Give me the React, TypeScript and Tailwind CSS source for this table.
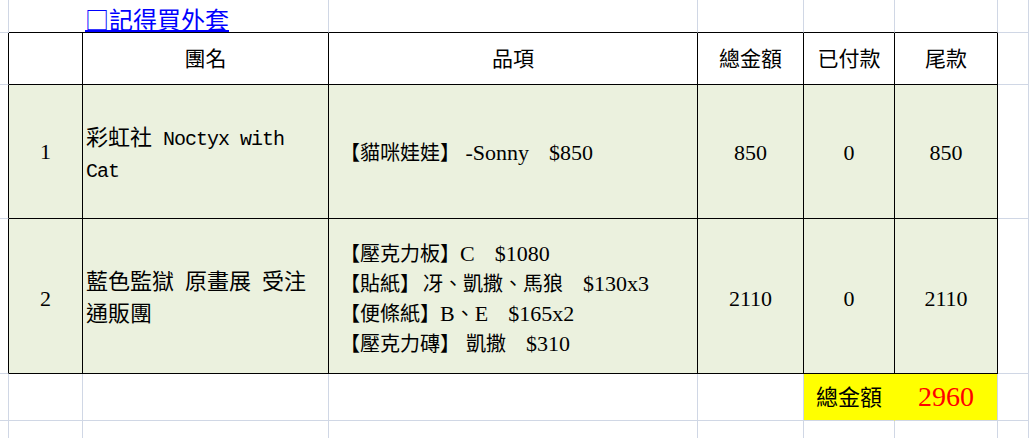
import React from "react";

const serif = "font-['Liberation_Serif','Noto_Sans_CJK_TC',serif]";

// latin part of an item line, a bit larger than the CJK text like in the sheet
function L({ children }: { children: React.ReactNode }) {
  return <span className="text-[22px]">{children}</span>;
}

// half-width monospaced latin used in the 團名 column
function M({ children }: { children: React.ReactNode }) {
  return <span className="font-['Liberation_Mono',monospace] text-[20px] tracking-[-1px]">{children}</span>;
}

export default function App() {
  return (
    <div className={`w-[1029px] h-[438px] overflow-hidden bg-white text-black ${serif}`}>
      <div className="grid grid-cols-[9px_74px_246px_369px_106px_91px_103px_31px] grid-rows-[33px_52px_134px_155px_47px_17px]">
        {/* row 0 – note above the table */}
        <div className="border-r border-b border-[#d0d7e5]" />
        <div className="border-b border-b-black" />
        <div className="border-r border-b border-r-[#d0d7e5] border-b-black flex items-end pl-[2px] pb-[1px]">
          <span className="text-[24px] leading-[25px] text-[#0000ff] underline underline-offset-[1px] font-['Noto_Sans_CJK_TC',sans-serif]">
            □記得買外套
          </span>
        </div>
        <div className="border-r border-b border-r-[#d0d7e5] border-b-black" />
        <div className="border-r border-b border-r-[#d0d7e5] border-b-black" />
        <div className="border-r border-b border-r-[#d0d7e5] border-b-black" />
        <div className="border-r border-b border-r-[#d0d7e5] border-b-black" />
        <div className="border-r border-b border-[#d0d7e5]" />

        {/* row 1 – header */}
        <div className="border-r border-b border-r-black border-b-[#d0d7e5]" />
        <div className="border-r border-b border-black" />
        <div className="border-r border-b border-black flex items-center justify-center pt-[3px] text-[21px]">團名</div>
        <div className="border-r border-b border-black flex items-center justify-center pt-[3px] text-[21px]">品項</div>
        <div className="border-r border-b border-black flex items-center justify-center pt-[3px] text-[21px]">總金額</div>
        <div className="border-r border-b border-black flex items-center justify-center pt-[3px] text-[21px]">已付款</div>
        <div className="border-r border-b border-black flex items-center justify-center pt-[3px] text-[21px]">尾款</div>
        <div className="border-r border-b border-[#d0d7e5]" />

        {/* row 2 */}
        <div className="border-r border-b border-r-black border-b-[#d0d7e5]" />
        <div className="border-r border-b border-black bg-[#ebf1de] flex items-center justify-center text-[22px]">1</div>
        <div className="border-r border-b border-black bg-[#ebf1de] flex items-center pl-[3px] pt-[6px] text-[22px] leading-[30px]">
          <div>
            彩虹社<M> Noctyx with</M>
            <br />
            <M>Cat</M>
          </div>
        </div>
        <div className="border-r border-b border-black bg-[#ebf1de] flex items-center pl-[11px] pt-[2px] text-[20px] leading-[30px]">
          <div>
            【貓咪娃娃】<L> -Sonny</L>　<L>$850</L>
          </div>
        </div>
        <div className="border-r border-b border-black bg-[#ebf1de] flex items-center justify-center pt-[2px] text-[22px]">850</div>
        <div className="border-r border-b border-black bg-[#ebf1de] flex items-center justify-center pt-[2px] text-[22px]">0</div>
        <div className="border-r border-b border-black bg-[#ebf1de] flex items-center justify-center pt-[2px] text-[22px]">850</div>
        <div className="border-r border-b border-[#d0d7e5]" />

        {/* row 3 */}
        <div className="border-r border-b border-r-black border-b-[#d0d7e5]" />
        <div className="border-r border-b border-black bg-[#ebf1de] flex items-center justify-center pt-[4px] text-[22px]">2</div>
        <div className="border-r border-b border-black bg-[#ebf1de] flex items-center pl-[3px] pt-[4px] text-[22px] leading-[30px]">
          <div>
            藍色監獄<M> </M>原畫展<M> </M>受注
            <br />
            通販團
          </div>
        </div>
        <div className="border-r border-b border-black bg-[#ebf1de] flex items-center pl-[11px] pt-[6px] text-[20px] leading-[30px]">
          <div>
            <div>【壓克力板】<L>C</L>　<L>$1080</L></div>
            <div>【貼紙】<span className="ml-[3px]">冴、凱撒、馬狼</span>　<L>$130x3</L></div>
            <div>【便條紙】<L>B</L>、<L>E</L>　<L>$165x2</L></div>
            <div>【壓克力磚】<span className="ml-[6px]">凱撒</span>　<L>$310</L></div>
          </div>
        </div>
        <div className="border-r border-b border-black bg-[#ebf1de] flex items-center justify-center pt-[4px] text-[22px]">2110</div>
        <div className="border-r border-b border-black bg-[#ebf1de] flex items-center justify-center pt-[4px] text-[22px]">0</div>
        <div className="border-r border-b border-black bg-[#ebf1de] flex items-center justify-center pt-[4px] text-[22px]">2110</div>
        <div className="border-r border-b border-[#d0d7e5]" />

        {/* row 4 – total */}
        <div className="border-r border-b border-[#d0d7e5]" />
        <div className="border-r border-b border-[#d0d7e5]" />
        <div className="border-r border-b border-[#d0d7e5]" />
        <div className="border-r border-b border-[#d0d7e5]" />
        <div className="border-r border-b border-[#d0d7e5]" />
        <div className="border-r border-b border-r-[#ffff00] border-b-[#d0d7e5] bg-[#ffff00] flex items-center justify-center text-[22px]">
          總金額
        </div>
        <div className="border-r border-b border-[#d0d7e5] bg-[#ffff00] flex items-center justify-center text-[28px] text-[#ff0000]">
          2960
        </div>
        <div className="border-r border-b border-[#d0d7e5]" />

        {/* row 5 */}
        <div className="border-r border-[#d0d7e5]" />
        <div className="border-r border-[#d0d7e5]" />
        <div className="border-r border-[#d0d7e5]" />
        <div className="border-r border-[#d0d7e5]" />
        <div className="border-r border-[#d0d7e5]" />
        <div className="border-r border-[#d0d7e5]" />
        <div className="border-r border-[#d0d7e5]" />
        <div className="border-r border-[#d0d7e5]" />
      </div>
    </div>
  );
}
